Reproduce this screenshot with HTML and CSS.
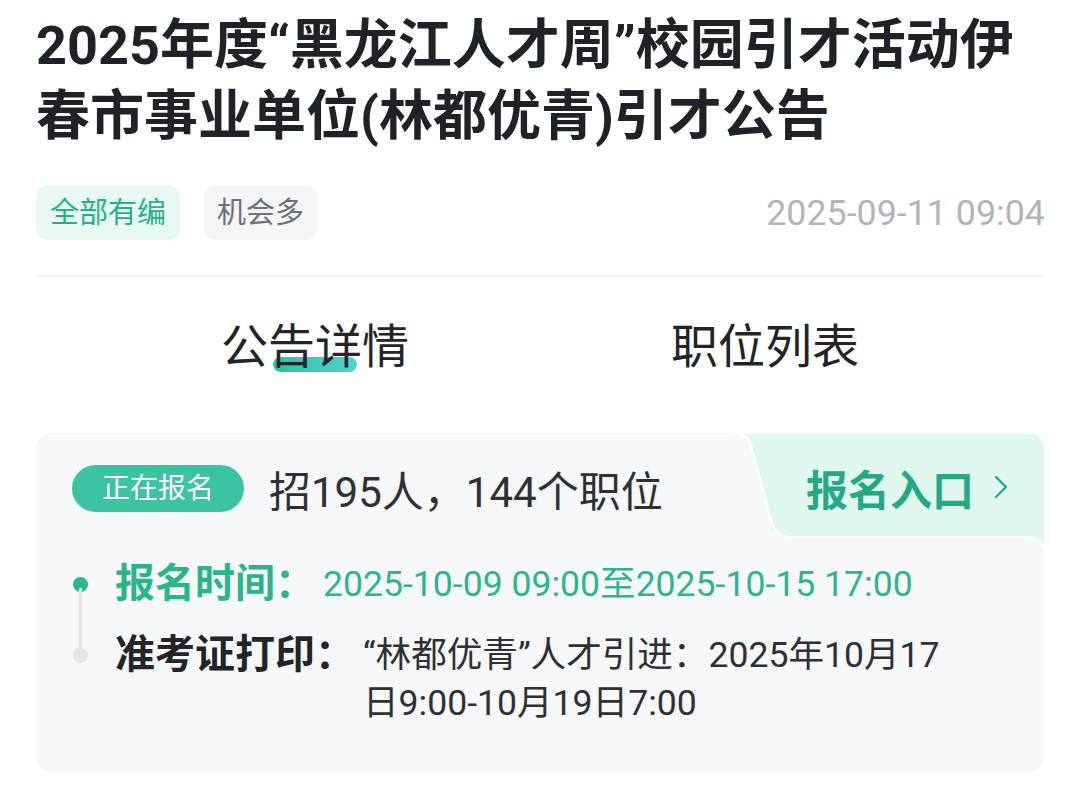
FILE: index.html
```html
<!DOCTYPE html>
<html lang="zh-CN">
<head>
<meta charset="utf-8">
<link rel="stylesheet" href="styles.css">
</head>
<body>
<div class="page">
  <h1 class="title">2025年度“黑龙江人才周”校园引才活动伊春市事业单位(林都优青)引才公告</h1>
  <div class="meta">
    <div class="tags">
      <span class="tag tag-green">全部有编</span>
      <span class="tag tag-gray">机会多</span>
    </div>
    <span class="date">2025-09-11 09:04</span>
  </div>
  <div class="divider"></div>
  <div class="tabs">
    <div class="tab active"><span class="tab-label">公告详情</span></div>
    <div class="tab"><span class="tab-label">职位列表</span></div>
  </div>
  <div class="card">
    <div class="card-top">
      <div class="summary">
        <span class="pill">正在报名</span>
        <span class="count">招195人，144个职位</span>
      </div>
      <div class="entry">
        <svg class="entry-bg" width="312" height="124" viewBox="0 0 312 124">
          <path d="M-2 0 C9 0 15 4 17 12 L38 90 C41 100 48 104 60 104 L294 104 C303 104 311 111 311 121 L311 0 Z" fill="#e0f7f0" stroke="#ffffff" stroke-width="2"/>
        </svg>
        <span class="entry-text">报名入口</span>
        <svg class="chevron" width="14" height="24" viewBox="0 0 14 24"><path d="M2 2 L12 12 L2 22" fill="none" stroke="#25a982" stroke-width="2.4" stroke-linecap="round" stroke-linejoin="round"/></svg>
      </div>
    </div>
    <div class="timeline">
      <div class="tl-item first">
        <span class="rail"><span class="dot dot-green"></span></span>
        <span class="tl-label green">报名时间：</span>
        <span class="tl-value green">2025-10-09 09:00至2025-10-15 17:00</span>
      </div>
      <div class="tl-item">
        <span class="rail"><span class="dot dot-gray"></span></span>
        <span class="tl-label">准考证打印：</span>
        <span class="tl-value">“林都优青”人才引进：2025年10月17日9:00-10月19日7:00</span>
      </div>
    </div>
  </div>
</div>
</body>
</html>
```

FILE: styles.css
```css
* { box-sizing: border-box; }
html, body { margin: 0; padding: 0; background: #ffffff; }
body {
  font-family: Roboto, "Noto Sans CJK SC", sans-serif;
  color: #222428;
}
.page {
  padding: 10px 36px 0 36px;
}
.title {
  margin: 0;
  font-size: 54px;
  line-height: 71px;
  font-weight: 700;
  color: #1f2226;
}
.meta {
  margin-top: 34px;
  display: flex;
  align-items: center;
  justify-content: space-between;
  height: 54px;
}
.tags { display: flex; gap: 24px; }
.tag {
  display: inline-block;
  height: 54px;
  line-height: 54px;
  font-size: 29px;
  padding: 0 14px;
  border-radius: 10px;
}
.tag-green { background: #e8f8f2; color: #27b088; }
.tag-gray { background: #f4f5f7; color: #6c7077; padding: 0 13px; }
.date {
  font-size: 35.8px;
  color: #b2b4b9;
  margin-right: -1px;
}
.divider {
  margin-top: 35px;
  height: 2px;
  background: #f0f1f2;
}
.tabs {
  display: flex;
  justify-content: center;
  margin-top: 40px;
}
.tab {
  width: 450px;
  display: flex;
  justify-content: center;
}
.tab-label {
  position: relative;
  z-index: 0;
  font-size: 47px;
  line-height: 60px;
  color: #222428;
}
.tab.active .tab-label::after {
  content: "";
  position: absolute;
  left: 50%;
  width: 84px;
  margin-left: -42px;
  top: 40px;
  height: 15px;
  border-radius: 8px;
  background: linear-gradient(90deg, #2fc2a2, #4fd3c9);
  z-index: -1;
}
.card {
  margin-top: 56px;
  background: #f5f7f9;
  border-radius: 16px;
  overflow: hidden;
  height: 340px;
}
.card-top {
  display: flex;
  justify-content: space-between;
  height: 106px;
}
.summary {
  display: flex;
  align-items: center;
  padding-left: 36px;
  padding-top: 4px;
  gap: 25px;
}
.pill {
  display: inline-block;
  height: 47px;
  line-height: 47px;
  padding: 0 30px;
  border-radius: 24px;
  background: #3bc3a2;
  color: #ffffff;
  font-size: 28px;
}
.count {
  font-size: 42px;
  color: #2e3034;
}
.entry {
  position: relative;
  width: 310px;
  display: flex;
  align-items: center;
  padding-left: 72px;
  padding-top: 2px;
  gap: 20px;
}
.entry-bg {
  position: absolute;
  left: 0;
  top: 0;
  z-index: 0;
  overflow: visible;
}
.entry-text {
  position: relative;
  font-size: 42px;
  font-weight: 700;
  color: #25a982;
}
.chevron { position: relative; }
.timeline {
  padding: 21px 90px 0 37px;
  display: flex;
  flex-direction: column;
  gap: 23px;
}
.tl-item {
  display: flex;
  align-items: flex-start;
}
.rail {
  position: relative;
  width: 15px;
  height: 48px;
  display: flex;
  align-items: center;
  margin-right: 27px;
  flex-shrink: 0;
}
.dot {
  width: 15px;
  height: 15px;
  border-radius: 50%;
}
.dot-green { background: #2bb890; }
.dot-gray { background: #e3e5e8; }
.tl-item.first .rail::after {
  content: "";
  position: absolute;
  left: 6px;
  width: 3px;
  top: 28px;
  height: 64px;
  background: #e1e3e6;
}
.tl-label {
  font-size: 40px;
  line-height: 48px;
  font-weight: 700;
  color: #222428;
  flex-shrink: 0;
  margin-right: 8px;
}
.tl-value {
  font-size: 35.6px;
  line-height: 48px;
  color: #2e3034;
}
.green { color: #2bb38a; }
.tl-value.green { color: #2fb48d; }
```
